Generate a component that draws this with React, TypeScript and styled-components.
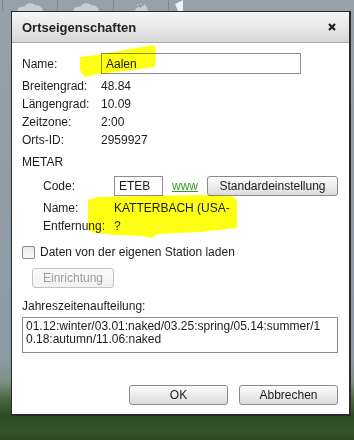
import styled, { createGlobalStyle } from 'styled-components';

const GlobalStyle = createGlobalStyle`
  html, body {
    margin: 0;
    padding: 0;
  }
  body {
    font-family: 'Liberation Sans', Arial, sans-serif;
    font-size: 12px;
    color: #1c1c1c;
  }
`;

const Desktop = styled.div`
  position: relative;
  width: 354px;
  height: 440px;
  overflow: hidden;
  background: linear-gradient(
    180deg,
    #96a1aa 0px,
    #8d99a2 360px,
    #7d8d86 382px,
    #4f6a45 398px,
    #2c4b24 416px,
    #35562d 430px,
    #2a4722 440px
  );
`;

const Toolbar = styled.div`
  display: flex;
  height: 11px;
  padding-left: 2px;
  overflow: hidden;
`;

const ToolSlot = styled.div<{ $w: number }>`
  width: ${(p) => p.$w}px;
  flex: none;
  display: flex;
  justify-content: center;
  align-items: flex-end;
  border-left: 1px solid #7b8790;
  box-sizing: border-box;
`;

const Dialog = styled.div`
  margin-left: 11px;
  width: 337px;
  background: #fff;
  border: 1px solid #2a2a2a;
  border-right-width: 2px;
  border-bottom-width: 2px;
`;

const TitleBar = styled.div`
  height: 30px;
  display: flex;
  align-items: center;
  justify-content: space-between;
  padding: 0 13px 0 10px;
  background: linear-gradient(180deg, #f5f5f5 0%, #e6e6e6 55%, #d6d6d6 100%);
  border-bottom: 1px solid #a8a8a8;
`;

const Title = styled.span`
  font-weight: bold;
  font-size: 13px;
  color: #222;
`;

const Body = styled.div`
  padding: 10px 11px 9px 10px;
`;

const Row = styled.div<{ $h?: number; $mt?: number; $indent?: number }>`
  display: flex;
  align-items: center;
  height: ${(p) => p.$h ?? 18}px;
  margin-top: ${(p) => p.$mt ?? 0}px;
  padding-left: ${(p) => p.$indent ?? 0}px;
  white-space: nowrap;
`;

const Label = styled.span<{ $w: number }>`
  width: ${(p) => p.$w}px;
  flex: none;
`;

const TextInput = styled.div<{ $w: number; $h: number }>`
  width: ${(p) => p.$w}px;
  height: ${(p) => p.$h}px;
  box-sizing: border-box;
  border: 1px solid #8c8c8c;
  padding: 0 4px;
  display: flex;
  align-items: center;
  background: #fff;
`;

const Link = styled.span`
  margin-left: 9px;
  color: #3a9a28;
  text-decoration: underline;
`;

const Button = styled.div<{ $w: number; $disabled?: boolean }>`
  width: ${(p) => p.$w}px;
  height: 20px;
  box-sizing: border-box;
  display: flex;
  align-items: center;
  justify-content: center;
  border: 1px solid ${(p) => (p.$disabled ? '#c2c2c2' : '#8a8a8a')};
  border-radius: 3px;
  color: ${(p) => (p.$disabled ? '#9a9a9a' : '#1c1c1c')};
  background: ${(p) =>
    p.$disabled
      ? 'linear-gradient(180deg, #fbfbfb 0%, #f0f0f0 100%)'
      : 'linear-gradient(180deg, #fdfdfd 0%, #ececec 50%, #dcdcdc 100%)'};
`;

const PushRight = styled.div`
  margin-left: auto;
`;

const Checkbox = styled.span`
  width: 13px;
  height: 13px;
  box-sizing: border-box;
  flex: none;
  margin-right: 5px;
  border: 1px solid #8a8a8a;
  border-radius: 2px;
  background: linear-gradient(180deg, #e9e9e9 0%, #fafafa 100%);
`;

const SubButtonWrap = styled.div`
  margin: 7px 0 0 10px;
`;

const SeasonBox = styled.div`
  margin-top: 2px;
  width: 316px;
  height: 36px;
  box-sizing: border-box;
  border: 1px solid #8c8c8c;
  padding: 2px 3px;
  line-height: 13px;
  white-space: nowrap;
  overflow: hidden;
`;

const Footer = styled.div`
  display: flex;
  justify-content: flex-end;
  gap: 11px;
  margin-top: 32px;
`;

const Highlights = styled.svg`
  position: absolute;
  left: 0;
  top: 0;
  pointer-events: none;
  mix-blend-mode: multiply;
`;

function Cloud({ w = 26 }: { w?: number }) {
  return (
    <svg width={w} height={9} viewBox="0 0 26 9">
      <path d="M0,9 C1,5 4,4 7,5 C9,0.5 16,0 18,3.5 C21,2.5 25,4.5 26,9 Z" fill="#c6cdd2" />
    </svg>
  );
}

export default function App() {
  return (
    <>
      <GlobalStyle />
      <Desktop>
        <Toolbar>
          <ToolSlot $w={55}>
            <Cloud />
          </ToolSlot>
          <ToolSlot $w={56}>
            <Cloud />
          </ToolSlot>
          <ToolSlot $w={55}>
            <svg width={16} height={9} viewBox="0 0 16 9">
              <path d="M2,9 C3,5 6,4 8,6 C10,2 14,3 15,9 Z" fill="#c6cdd2" />
              <path d="M8,1 L8,3 M4,2 L5,4 M12,2 L11,4" stroke="#c6cdd2" strokeWidth="1" />
            </svg>
          </ToolSlot>
          <ToolSlot $w={20}>
            <svg width={14} height={11} viewBox="0 0 14 11">
              <path d="M3,4 L11,0 L11,11 L6,11 Z" fill="#eef1f3" />
            </svg>
          </ToolSlot>
        </Toolbar>
        <Dialog>
          <TitleBar>
            <Title>Ortseigenschaften</Title>
            <svg width={8} height={8} viewBox="0 0 8 8">
              <path d="M1,1 L7,7 M7,1 L1,7" stroke="#1e1e1e" strokeWidth="2.2" />
            </svg>
          </TitleBar>
          <Body>
            <Row $h={21}>
              <Label $w={79}>Name:</Label>
              <TextInput $w={200} $h={21}>Aalen</TextInput>
            </Row>
            <Row $mt={3}>
              <Label $w={79}>Breitengrad:</Label>
              48.84
            </Row>
            <Row>
              <Label $w={79}>Längengrad:</Label>
              10.09
            </Row>
            <Row>
              <Label $w={79}>Zeitzone:</Label>
              2:00
            </Row>
            <Row>
              <Label $w={79}>Orts-ID:</Label>
              2959927
            </Row>
            <Row $mt={4}>METAR</Row>
            <Row $h={20} $mt={5} $indent={21}>
              <Label $w={71}>Code:</Label>
              <TextInput $w={49} $h={20}>ETEB</TextInput>
              <Link>www</Link>
              <PushRight>
                <Button $w={131}>Standardeinstellung</Button>
              </PushRight>
            </Row>
            <Row $mt={3} $indent={21}>
              <Label $w={71}>Name:</Label>
              KATTERBACH (USA-
            </Row>
            <Row $indent={21}>
              <Label $w={71}>Entfernung:</Label>?
            </Row>
            <Row $mt={8}>
              <Checkbox />
              Daten von der eigenen Station laden
            </Row>
            <SubButtonWrap>
              <Button $w={82} $disabled>
                Einrichtung
              </Button>
            </SubButtonWrap>
            <Row $mt={9}>Jahreszeitenaufteilung:</Row>
            <SeasonBox>
              01.12:winter/03.01:naked/03.25:spring/05.14:summer/1
              <br />
              0.18:autumn/11.06:naked
            </SeasonBox>
            <Footer>
              <Button $w={99}>OK</Button>
              <Button $w={99}>Abbrechen</Button>
            </Footer>
          </Body>
        </Dialog>
        <Highlights width={354} height={440} viewBox="0 0 354 440">
          <path
            d="M80,57 L96,55 L124,50 L148,46 L155,45 L156,52 L155,67 L140,69 L115,72 L98,74 L84,77 L80,70 Z"
            fill="#ffff14"
          />
          <path
            d="M88,200 L97,197 L140,196 L200,195 L232,196 L237,200 L237,228 L200,232 L158,234 L151,238 L142,236 L115,235 L96,233 L88,230 Z"
            fill="#ffff14"
          />
        </Highlights>
      </Desktop>
    </>
  );
}
